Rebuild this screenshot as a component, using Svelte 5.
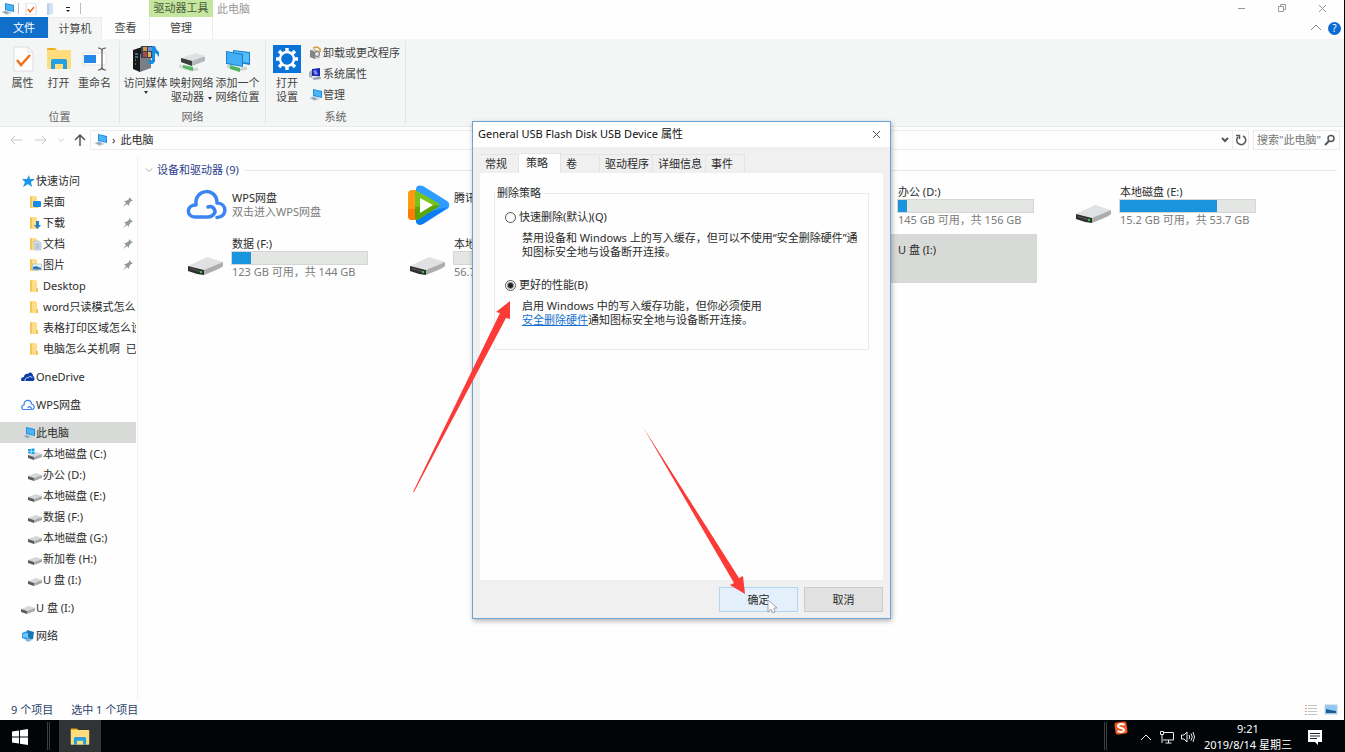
<script>
  let policy = 'better';
  let activeTab = '策略';
  let search = '';

  const tabs = ['常规', '策略', '卷', '驱动程序', '详细信息', '事件'];

  const sections = [
    [
      { label: '快速访问', icon: 'star' },
      { label: '桌面', icon: 'folderDesktop', child: true, pinned: true },
      { label: '下载', icon: 'folderDownload', child: true, pinned: true },
      { label: '文档', icon: 'folderDocument', child: true, pinned: true },
      { label: '图片', icon: 'folderPicture', child: true, pinned: true },
      { label: 'Desktop', icon: 'folder', child: true },
      { label: 'word只读模式怎么改', icon: 'folder', child: true },
      { label: '表格打印区域怎么设', icon: 'folder', child: true },
      { label: '电脑怎么关机啊  已剪', icon: 'folder', child: true }
    ],
    [{ label: 'OneDrive', icon: 'onedrive' }],
    [{ label: 'WPS网盘', icon: 'cloud' }],
    [
      { label: '此电脑', icon: 'pc', selected: true },
      { label: '本地磁盘 (C:)', icon: 'systemDrive', child: true },
      { label: '办公 (D:)', icon: 'drive', child: true },
      { label: '本地磁盘 (E:)', icon: 'drive', child: true },
      { label: '数据 (F:)', icon: 'drive', child: true },
      { label: '本地磁盘 (G:)', icon: 'drive', child: true },
      { label: '新加卷 (H:)', icon: 'drive', child: true },
      { label: 'U 盘 (I:)', icon: 'drive', child: true }
    ],
    [{ label: 'U 盘 (I:)', icon: 'drive' }],
    [{ label: '网络', icon: 'network' }]
  ];

  const items = [
    { name: 'WPS网盘', icon: 'cloud', note: '双击进入WPS网盘' },
    { name: '腾讯视频', icon: 'video' },
    { icon: 'drive' },
    { name: '办公 (D:)', icon: 'drive', used: 7, note: '145 GB 可用，共 156 GB' },
    { name: '本地磁盘 (E:)', icon: 'drive', used: 72, note: '15.2 GB 可用，共 53.7 GB' },
    { name: '数据 (F:)', icon: 'drive', used: 14, note: '123 GB 可用，共 144 GB' },
    { name: '本地磁盘 (G:)', icon: 'drive', used: 0, note: '56.7 GB 可用' },
    { icon: 'drive' },
    { name: 'U 盘 (I:)', icon: 'usb', selected: true }
  ];
</script>

{#snippet pcShape()}
  <path d="M5 1 L14 3 V10 L5 8 Z" fill="#1d8fe0" />
  <path d="M6 2 L13 4 V9 L6 7 Z" fill="#4db5f5" />
  <path d="M1 10 L6 8 L12 11 L7 13 Z" fill="#c3d3de" />
  <path d="M3 10 L6 9 L9 11 L6 12 Z" fill="#8ea5b5" />
{/snippet}

{#snippet folderShape()}
  <path d="M2 1 H7 L9 2 V13 H2 Z" fill="#ffdc86" />
  <path d="M2 1 L4 2 V12 L2 13 Z" fill="#f2c55c" />
  <path d="M8 9 L10 9 V13 H8 Z" fill="#f2c55c" />
{/snippet}

{#snippet driveShape()}
  <path d="M0 8 L8 5 L14 7 L6 10 Z" fill="#d5d7d8" />
  <path d="M0 8 L6 10 V13 L0 11 Z" fill="#5a5d5c" />
  <path d="M6 10 L14 7 V10 L6 13 Z" fill="#a7aaab" />
{/snippet}

{#snippet icon(name)}
  <svg class="icon" viewBox="0 0 14 14" aria-hidden="true">
    {#if name === 'star'}
      <path d="M8 1 L9 5 L14 5 L10 8 L11 13 L7 10 L2 13 L4 8 L1 5 L6 5 Z" fill="#1c97ea" />
    {:else if name === 'onedrive'}
      <path d="M0 10 C0 8 1 7 3 7 C3 5 5 3 7 4 C9 1 12 3 12 6 C14 7 14 11 12 11 H2 C1 11 0 11 0 10 Z" fill="#0b3fa8" />
      <path d="M4 11 C4 8 6 7 7 8 C8 6 11 6 11 8" fill="none" stroke="#fff" stroke-width="0.8" />
    {:else if name === 'cloud'}
      <path d="M10 11.500 H3 C0 11.500 0 7 3 7 C3 1 10 1 10.500 6 C14 6.500 14 11.500 11 11.500 C10 8 7 8 7 10" fill="none" stroke="#3b82ee" stroke-width="1.200" />
    {:else if name === 'pc'}
      {@render pcShape()}
    {:else if name === 'network'}
      <path d="M1 4 L6 2 L11 4 V9 L6 11 L1 9 Z" fill="#2d9be5" />
      <path d="M6 1 L13 3 L12 10 L8 11 Z" fill="#1777b6" />
      <path d="M2 5 L7 4 V9 L2 8 Z" fill="#72c8fa" />
      <path d="M4 11 L8 9 L11 11 L7 13 Z" fill="#86b7d4" />
    {:else if name === 'drive' || name === 'systemDrive'}
      {@render driveShape()}
      {#if name === 'systemDrive'}
        <path d="M0 2 h3 v2 h-3 z M3.500 1.500 h3 v2.500 h-3 z M0 4.500 h3 v2 h-3 z M3.500 4.500 h3 v2.500 h-3 z" fill="#16a6ee" />
      {/if}
    {:else}
      {@render folderShape()}
      {#if name === 'folderDesktop'}
        <rect x="5" y="6" width="8" height="6" rx="1" fill="#138ce8" />
      {:else if name === 'folderDownload'}
        <path d="M8 5 h3 v4 h2 L9.500 13 L6 9 h2 z" fill="#2680cf" />
      {:else if name === 'folderDocument'}
        <path d="M6 4 h5 l2 2 v7 h-7 z" fill="#dbe5ed" stroke="#9bb0c1" stroke-width="0.600" />
        <path d="M7.500 7 h4 M7.500 9 h4 M7.500 11 h4" stroke="#7f9bb2" stroke-width="0.800" />
      {:else if name === 'folderPicture'}
        <rect x="4.500" y="6" width="9" height="6" fill="#e3f1fb" stroke="#9fb8ca" stroke-width="0.600" />
        <path d="M5 11.500 V9 L8 8 L13 10 V11.500 Z" fill="#2b78b8" />
      {/if}
    {/if}
  </svg>
{/snippet}

{#snippet largeIcon(name)}
  <svg class="large-icon" viewBox="0 0 42 42" aria-hidden="true">
    {#if name === 'cloud'}
      <path d="M22 22 C28 20 31 27 27 30 Q25 32 22 32 H9 C0 32 0 20 10 20 C8 3 31 2 31 18 C41 18 42 32 31 32.500" fill="none" stroke="#3c84f2" stroke-width="3.500" stroke-linecap="round" stroke-linejoin="round" />
    {:else if name === 'video'}
      <rect x="0" y="5" width="14" height="30" rx="4" fill="#ff9a12" />
      <path d="M0 24 H12 V35 H4 C1 35 0 33 0 31 Z" fill="#ff7a0a" />
      <path d="M8 4 C8 0 12 0 15 1 L39 16 C42 18 42 22 39 24 L15 39 C11 41 8 39 8 36 Z" fill="#2d9dff" />
      <path d="M8 30 L40 22 L15 39 C11 41 8 39 8 36 Z" fill="#0c7cf2" />
      <path d="M7 7 Q8 5 11 7 L30 18 Q33 20 30 22 L11 34 Q8 36 7 34 Z" fill="#76c31b" />
      <path d="M7 22 L31 20 Q32 21 30 22 L11 34 Q8 36 7 34 Z" fill="#5aa40b" />
      <path d="M12 13 L25 20 L12 28 Z" fill="#fff" />
    {:else if name === 'drive'}
      <path d="M2 29 L21 20 Q22 20 24 21 L37 25 L19 33 Z" fill="#dfe1e2" />
      <path d="M2 29 L18 33 V38 Q9 37 2 34 Z" fill="#2d302f" />
      <path d="M18 33 L37 25 V29 Q36 31 18 38 Z" fill="#abadae" />
      <path d="M4 31 L14 34 V35 L4 32 Z" fill="#5b605e" />
      <rect x="14" y="34" width="2" height="2" fill="#35cd3f" />
    {:else}
      <path d="M8 26 L26 14 L34 20 L16 33 Z" fill="#7d8284" />
    {/if}
  </svg>
{/snippet}

{#snippet explorerIcon()}
  <svg class="ribbon-icon" viewBox="0 0 26 26" aria-hidden="true">
    <path d="M1 3 Q1 2 2 2 H9 L12 5 H1 Z" fill="#eeb01b" />
    <rect x="1" y="4" width="24" height="19" rx="1" fill="#ffdc7c" />
    <path d="M5 23 V15 Q5 13 7 13 H19 Q21 13 21 15 V23 H17 V18 H9 V23 Z" fill="#269fe0" />
  </svg>
{/snippet}

<div class="desktop">
  <div class="explorer">
    <header class="titlebar">
      <div class="quick-access">
        {@render icon('pc')}
        <span class="bar"></span>
        <button aria-label="属性">
          <svg viewBox="0 0 12 12"><path d="M1 0 h8 l2 2 v10 h-10 z" fill="#fff" stroke="#d4d4d4" /><path d="M3 6 L5 9 L9 4" fill="none" stroke="#ef6b19" stroke-width="1.500" /></svg>
        </button>
        <button aria-label="新建文件夹">
          <svg viewBox="0 0 12 12"><path d="M3 0 h5 l1 1 v10 l-6 1 z" fill="#d3e3f5" /><path d="M3 1 h2 v11 h-2 z" fill="#b9d0ea" /></svg>
        </button>
        <button aria-label="自定义快速访问工具栏">
          <svg viewBox="0 0 12 12"><path d="M3 4.500 h4" stroke="#222" /><path d="M3 7 h4 l-2 2 z" fill="#222" /></svg>
        </button>
        <span class="bar"></span>
      </div>
      <span class="tool-title">驱动器工具</span>
      <span class="window-title">此电脑</span>
      <div class="window-buttons">
        <button aria-label="最小化"><svg viewBox="0 0 10 10"><path d="M1 4.500 h7" /></svg></button>
        <button aria-label="还原"><svg viewBox="0 0 10 10"><path d="M1.500 2.500 h5 v5 h-5 z M3.500 2.500 v-2 h5 v5 h-2" /></svg></button>
        <button aria-label="关闭"><svg viewBox="0 0 10 10"><path d="M2 1 L9 8 M9 1 L2 8" /></svg></button>
      </div>
    </header>

    <nav class="ribbon-tabs">
      <button class="file">文件</button>
      <button class="current">计算机</button>
      <button class="view">查看</button>
      <button class="manage">管理</button>
      <div class="ribbon-help">
        <button aria-label="最小化功能区"><svg viewBox="0 0 12 12"><path d="M1 8 L6 3 L11 8" fill="none" stroke="#888" /></svg></button>
        <button class="help" aria-label="帮助">?</button>
      </div>
    </nav>

    <div class="ribbon">
      <section class="group place">
        <div class="tools">
          <button class="tool">
            <svg class="ribbon-icon" viewBox="0 0 26 26"><path d="M4 1 H18 L23 6 V25 H4 Z" fill="#fdfdfd" stroke="#dedede" /><path d="M18 1 V6 H23" fill="none" stroke="#dedede" /><path d="M7 14 L11 19 L20 9" fill="none" stroke="#f0731c" stroke-width="2.500" /></svg>
            <span>属性</span>
          </button>
          <button class="tool">
            {@render explorerIcon()}
            <span>打开</span>
          </button>
          <button class="tool">
            <svg class="ribbon-icon" viewBox="0 0 26 26"><rect x="1" y="7" width="23" height="12" fill="#fff" stroke="#e2e2e2" /><rect x="2" y="9" width="12" height="8" fill="#2388e8" /><path d="M16 2 Q20 2 20 5 Q20 2 24 2 M20 4 V22 M16 24 Q20 24 20 21 Q20 24 24 24" fill="none" stroke="#555" stroke-width="1.200" /></svg>
            <span>重命名</span>
          </button>
        </div>
        <h2>位置</h2>
      </section>

      <section class="group net">
        <div class="tools">
          <button class="tool">
            <svg class="ribbon-icon" viewBox="0 0 26 26">
              <path d="M0 4 L9 1 V23 L7 26 L0 23 Z" fill="#18191b" /><path d="M7 8 L18 4 V22 L7 26 Z" fill="#7b7e82" />
              <path d="M8 0 H20 V12 H8 Z" fill="#33415a" /><path d="M10 1 h4 v4 h-4 z" fill="#d39b3c" /><path d="M15 1 h4 v4 h-4 z" fill="#6f8fd0" /><path d="M10 6 h4 v5 h-4 z" fill="#b04a36" /><path d="M15 6 h3 v5 h-3 z" fill="#d9b56a" />
              <path d="M2 8 h3 M2 11 h3 M2 14 h1 M2 18 h1" stroke="#7fb7dd" /><ellipse cx="18" cy="16" rx="3" ry="2" fill="#178de0" /><path d="M19 0 H22 Q23 4 26 6 Q27 9 25 11 Q25 8 22 7 V16 H19 Z" fill="#178de0" />
            </svg>
            <span>访问媒体</span>
            <i class="caret"></i>
          </button>
          <button class="tool">
            <svg class="ribbon-icon" viewBox="0 0 26 26">
              <path d="M2 13 L17 8 L26 11 V15 L13 20 L2 16 Z" fill="#b6b9bb" /><path d="M2 12 L17 7 L26 10 L13 15 Z" fill="#dfe1e2" /><path d="M2 12 L13 15 V20 L2 16 Z" fill="#3b3e3d" />
              <path d="M0 20 L12 24 L19 23" fill="none" stroke="#d0d7d2" stroke-width="3" /><path d="M4 19 L14 21 V25 L4 22 Z" fill="#53b968" />
            </svg>
            <span>映射网络<br />驱动器<i class="caret inline"></i></span>
          </button>
          <button class="tool">
            <svg class="ribbon-icon" viewBox="0 0 26 26">
              <path d="M8 4 L25 6 V19 L8 16 Z" fill="#1480d3" /><path d="M9 5 L24 7 V17 L9 15 Z" fill="#58bcf6" />
              <path d="M1 5 L18 8 V21 L1 18 Z" fill="#1480d3" /><path d="M2 6 L17 9 V20 L2 17 Z" fill="#42aef3" />
              <path d="M2 20 L13 24 L22 22" fill="none" stroke="#cdd5d0" stroke-width="3" /><path d="M5 19 L15 22 V26 L5 23 Z" fill="#4db561" />
            </svg>
            <span>添加一个<br />网络位置</span>
          </button>
        </div>
        <h2>网络</h2>
      </section>

      <section class="group system">
        <div class="tools">
          <button class="tool">
            <svg class="ribbon-icon gear" viewBox="0 0 28 28">
              <rect width="28" height="28" fill="#0a73da" />
              <circle cx="14" cy="14" r="7" fill="none" stroke="#fff" stroke-width="2.400" />
              <path d="M14 7 V3 M14 21 V25 M7 14 H3 M21 14 H25 M9 9 L6 6 M19 9 L22 6 M9 19 L6 22 M19 19 L22 22" stroke="#fff" stroke-width="3.400" />
            </svg>
            <span>打开<br />设置</span>
          </button>
          <div class="links">
            <button>
              <svg class="icon" viewBox="0 0 14 14"><path d="M2 4 L7 3 L12 5 V12 L7 13 L2 11 Z" fill="#c9c6bb" /><path d="M2 4 L7 6 V13 L2 11 Z" fill="#85867f" /><circle cx="9" cy="8" r="2.500" fill="#e8e9e6" stroke="#777" /><path d="M5 2 L9 1 L12 3 V6" fill="none" stroke="#d79a36" stroke-width="1.500" /></svg>
              卸载或更改程序
            </button>
            <button>
              <svg class="icon" viewBox="0 0 14 14"><path d="M1 5 L4 3 V11 L1 10 Z" fill="#a8b1bb" /><path d="M4 2 L12 1 V9 L4 9 Z" fill="#1d25b5" /><path d="M5 4 L8 3 L10 7 L7 8 Z" fill="#7b8df0" /><path d="M4 11 L12 9 L13 12 L6 13 Z" fill="#9aa5b3" /></svg>
              系统属性
            </button>
            <button>
              {@render icon('pc')}
              管理
            </button>
          </div>
        </div>
        <h2>系统</h2>
      </section>
    </div>

    <div class="address-row">
      <div class="history">
        <button aria-label="后退" disabled><svg viewBox="0 0 12 12"><path d="M12 6 H1 M5 2 L1 6 L5 10" stroke="#c8c8c8" /></svg></button>
        <button aria-label="前进" disabled><svg viewBox="0 0 12 12"><path d="M0 6 H11 M7 2 L11 6 L7 10" stroke="#c8c8c8" /></svg></button>
        <button class="small" aria-label="最近浏览的位置"><svg viewBox="0 0 12 12"><path d="M2 4 L6 8 L10 4" stroke="#b5b5b5" /></svg></button>
        <button aria-label="上移"><svg viewBox="0 0 12 12"><path d="M6 12 V1 M1 6 L6 1 L11 6" stroke="#555" stroke-width="1.500" /></svg></button>
      </div>
      <div class="address">
        {@render icon('pc')}
        <span class="crumb-arrow">›</span>
        <a href="#pc">此电脑</a>
        <button class="drop" aria-label="以前的位置"><svg viewBox="0 0 12 12"><path d="M3 4 L6 7 L9 4" stroke="#555" stroke-width="2" /></svg></button>
        <button class="refresh" aria-label="刷新"><svg viewBox="0 0 12 12"><path d="M8 2 A4.500 4.500 0 1 1 3 3 M1 1.500 H4.500 V5" stroke="#555" stroke-width="1.500" /></svg></button>
      </div>
      <div class="search">
        <input type="text" bind:value={search} placeholder={'搜索"此电脑"'} aria-label="搜索" />
        <svg viewBox="0 0 12 12"><circle cx="7" cy="4.500" r="3" stroke="#555" stroke-width="1.500" /><path d="M5 7 L1 11" stroke="#555" stroke-width="2" /></svg>
      </div>
    </div>

    <div class="body">
      <nav class="tree">
        {#each sections as section}
          <ul>
            {#each section as node}
              <li>
                <a href="#node" class:child={node.child} class:selected={node.selected}>
                  {@render icon(node.icon)}
                  <span>{node.label}</span>
                  {#if node.pinned}
                    <svg class="pin" viewBox="0 0 10 10"><path d="M6 0 L10 4 L8 4 L6 7 V9 L4 7 L0 10 L3 6 L1 4 H3 L6 2 Z" fill="#8d989f" /></svg>
                  {/if}
                </a>
              </li>
            {/each}
          </ul>
        {/each}
      </nav>

      <main class="content">
        <div class="content-title">
          <svg viewBox="0 0 10 10"><path d="M1 3 L5 7 L9 3" fill="none" stroke="#999" /></svg>
          <h1>设备和驱动器 (9)</h1>
          <span class="rule"></span>
        </div>
        <div class="tiles">
          {#each items as item}
            <button class="tile" class:selected={item.selected} class:volume={item.used !== undefined}>
              {@render largeIcon(item.icon)}
              {#if item.name}
                <span class="info">
                  <span class="name">{item.name}</span>
                  {#if item.used !== undefined}
                    <span class="usage"><span class="used" style="width: {item.used}%"></span></span>
                  {/if}
                  {#if item.note}
                    <span class="note">{item.note}</span>
                  {/if}
                </span>
              {/if}
            </button>
          {/each}
        </div>
      </main>
    </div>

    <footer class="status">
      <span>9 个项目</span>
      <span class="picked">选中 1 个项目</span>
      <div class="views">
        <button aria-label="详细信息"><svg viewBox="0 0 14 12"><path d="M1 1.500 h2 M1 4.500 h2 M1 7.500 h2 M1 10.500 h2" stroke="#d5a58e" /><path d="M4 1.500 h9 M4 4.500 h9 M4 7.500 h9 M4 10.500 h9" stroke="#c2c2c2" /></svg></button>
        <button aria-label="大图标"><svg viewBox="0 0 14 12"><rect x="1" y="1" width="12" height="9" fill="#8ec8f4" stroke="#b7cddd" /><path d="M2 9 V5 L6 6 L12 7 V9 Z" fill="#1b5c94" /></svg></button>
      </div>
    </footer>
  </div>

  <div class="taskbar">
    <button class="start" aria-label="开始">
      <svg viewBox="0 0 16 16"><path d="M0 2.500 L7 1.500 V7.500 H0 Z M8 1.300 L16 0 V7.500 H8 Z M0 8.500 H7 V14.500 L0 13.500 Z M8 8.500 H16 V16 L8 14.700 Z" fill="#fff" /></svg>
    </button>
    <span class="grip"></span>
    <button class="running" aria-label="文件资源管理器">{@render explorerIcon()}</button>
    <div class="tray">
      <span class="grip"></span>
      <svg class="sogou" viewBox="0 0 14 14"><rect x="1" y="1" width="12" height="12" rx="2" fill="#f0591d" transform="rotate(-8 7 7)" /><path d="M10.500 4 C8 2.500 4 3 4 5 C4 7.500 10 6.500 10 9 C10 11 6 11.500 3.500 10" fill="none" stroke="#fff" stroke-width="2" /></svg>
      <button aria-label="显示隐藏的图标"><svg viewBox="0 0 14 14"><path d="M2 10 L7 5 L12 10" /></svg></button>
      <button aria-label="网络"><svg viewBox="0 0 14 14"><path d="M4 2.500 H13.500 V10 H3 M8.500 10 V13 M5.500 13 H11.500 M0.500 1.500 H3.500 V4.500 H0.500 Z M2 4.500 V13" /></svg></button>
      <button aria-label="音量"><svg viewBox="0 0 14 14"><path d="M0.500 5 H3 L6 2 V12 L3 9 H0.500 Z M8 5 Q9.500 7 8 9 M10 3.500 Q12.500 7 10 10.500 M12 2 Q15 7 12 12" /></svg></button>
      <div class="clock"><span>9:21</span><span>2019/8/14 星期三</span></div>
      <button class="action" aria-label="操作中心"><svg viewBox="0 0 16 16"><path d="M1 1 H15 V13 H11 V16 L8 13 H1 Z" fill="#fff" stroke="none" /><path d="M3 4.500 H13 M3 7 H13 M3 9.500 H10" stroke="#222" /></svg></button>
    </div>
  </div>

  <div class="dialog" role="dialog" aria-labelledby="dialog-title">
    <div class="dialog-title">
      <h2 id="dialog-title">General USB Flash Disk USB Device 属性</h2>
      <button aria-label="关闭"><svg viewBox="0 0 10 10"><path d="M2 2 L9 9 M9 2 L2 9" stroke="#555" /></svg></button>
    </div>

    <div class="dialog-body">
      <div class="dialog-tabs" role="tablist">
        {#each tabs as tab}
          <button role="tab" aria-selected={tab === activeTab} class:active={tab === activeTab} on:click={() => (activeTab = tab)}>{tab}</button>
        {/each}
      </div>

      <div class="pane">
        <fieldset>
          <legend>删除策略</legend>
          <div class="options">
            <label for="quick"><input id="quick" type="radio" name="policy" value="quick" bind:group={policy} />快速删除(默认)(Q)</label>
            <p>禁用设备和 Windows 上的写入缓存，但可以不使用“安全删除硬件”通<br />知图标安全地与设备断开连接。</p>
            <label for="better"><input id="better" type="radio" name="policy" value="better" bind:group={policy} />更好的性能(B)</label>
            <p>启用 Windows 中的写入缓存功能，但你必须使用<br /><a href="#remove">安全删除硬件</a>通知图标安全地与设备断开连接。</p>
          </div>
        </fieldset>
      </div>

      <div class="actions">
        <button class="ok">确定</button>
        <button>取消</button>
      </div>
    </div>

    <svg class="marks" viewBox="0 0 418 498" aria-hidden="true">
      <path d="M-59 371 L28 192 L24 191 L38 180 V198 L34 197 L-58 371 Z" fill="#fc3a38" />
      <path d="M171 306 L262 462 L258 464 L273 473 L271 455 L267 457 Z" fill="#fc3a38" />
      <path d="M296 479 V491 L299 488 L301 492 L303 491 L302 487 H305 Z" fill="#fff" stroke="#8d9194" stroke-width="0.800" />
    </svg>
  </div>
</div>

<style>
  :global(body) {
    background-color: #fdfefd;
  }

  .desktop {
    display: flex;
    flex-direction: column;
    position: relative;
    min-height: 100vh;
    overflow: hidden;
    color: #2b2b2b;
    font-family: "Noto Sans", "Noto Sans CJK SC", sans-serif;
    font-size: 11px;
    line-height: 14px;
  }

  button, input {
    margin: 0;
    padding: 0;
    border: 0;
    background: none;
    color: inherit;
    font: inherit;
  }

  h1, h2, p, ul {
    margin: 0;
    padding: 0;
    font-size: 11px;
    font-weight: normal;
  }

  ul {
    list-style: none;
  }

  svg {
    display: block;
    flex: none;
  }

  a {
    color: inherit;
    text-decoration: none;
  }

  .icon {
    width: 14px;
    height: 14px;
  }

  .explorer {
    display: flex;
    flex: 1;
    flex-direction: column;
    border-right: 1px solid #000;
  }

  /* title bar */
  .titlebar {
    display: flex;
    align-items: center;
    height: 17px;
  }

  .quick-access {
    display: flex;
    align-items: center;
    gap: 4px;
    width: 149px;
  }

  .quick-access .bar {
    width: 1px;
    height: 11px;
    background-color: #bbb;
  }

  .quick-access button {
    padding: 0 1px 0 2px;
  }

  .quick-access button svg {
    width: 12px;
    height: 12px;
  }

  .tool-title {
    width: 64px;
    height: 17px;
    background-color: #c5e69f;
    color: #4a5a3c;
    line-height: 16px;
    text-align: center;
  }

  .window-title {
    padding-left: 4px;
    color: #999;
  }

  .window-buttons {
    display: flex;
    gap: 30px;
    margin-left: auto;
    padding-right: 17px;
  }

  .window-buttons svg {
    width: 10px;
    height: 10px;
    fill: none;
    stroke: #999;
  }

  /* ribbon */
  .ribbon-tabs {
    display: flex;
    height: 22px;
  }

  .ribbon-tabs > button {
    width: 54px;
    color: #444;
  }

  .ribbon-tabs > .file {
    width: 48px;
    height: 21px;
    background-color: #0f6fcb;
    color: #fff;
  }

  .ribbon-tabs > .current {
    background-color: #f4f6f5;
    border: 1px solid #ebebeb;
    border-bottom: 0;
  }

  .ribbon-tabs > .view {
    width: 47px;
  }

  .ribbon-tabs > .manage {
    width: 64px;
    border: 1px solid #ededed;
    border-width: 0 1px;
  }

  .ribbon-help {
    display: flex;
    align-items: center;
    gap: 6px;
    margin-left: auto;
    padding-right: 3px;
  }

  .ribbon-help svg {
    width: 12px;
    height: 12px;
  }

  .ribbon-help .help {
    width: 13px;
    height: 13px;
    border-radius: 50%;
    background-color: #0a6cd2;
    color: #fff;
    font-size: 10px;
    line-height: 13px;
  }

  .ribbon {
    display: flex;
    height: 87px;
    background-color: #f4f6f5;
    border-bottom: 1px solid #e8eae9;
  }

  .group {
    display: flex;
    flex-direction: column;
    justify-content: space-between;
    margin: 2px 0;
    padding-top: 5px;
    border-right: 1px solid #e4e6e5;
  }

  .group.place {
    width: 119px;
  }

  .group.net {
    width: 145px;
  }

  .group.system {
    width: 139px;
  }

  .group h2 {
    color: #666;
    text-align: center;
  }

  .tools {
    display: flex;
    justify-content: center;
    padding-right: 2px;
    color: #444;
  }

  .tool {
    display: flex;
    flex-direction: column;
    align-items: center;
    gap: 4px;
    min-width: 36px;
  }

  .net .tool {
    min-width: 46px;
  }

  .ribbon-icon {
    width: 26px;
    height: 26px;
  }

  .ribbon-icon.gear {
    width: 28px;
    height: 28px;
    margin: -1px 0;
  }

  .caret {
    border: 2px solid transparent;
    border-top: 3px solid #333;
    border-bottom: 0;
  }

  .tool > .caret {
    margin-top: -3px;
  }

  .caret.inline {
    display: inline-block;
    margin-left: 4px;
    vertical-align: middle;
  }

  .links {
    display: flex;
    flex-direction: column;
    gap: 7px;
    padding-left: 3px;
  }

  .links button {
    display: flex;
    align-items: center;
    gap: 1px;
  }

  /* address */
  .address-row {
    display: flex;
    align-items: flex-start;
    gap: 4px;
    padding: 3px 4px 5px 10px;
  }

  .history {
    display: flex;
    align-items: center;
    gap: 13px;
    width: 76px;
    height: 20px;
  }

  .address-row svg:not(.icon) {
    width: 12px;
    height: 12px;
    fill: none;
  }

  .history .small {
    margin: 0 -4px 0 -3px;
  }

  .history .small svg {
    width: 8px;
  }

  .address {
    display: flex;
    flex: 1;
    align-items: center;
    height: 18px;
    padding-left: 2px;
    border: 1px solid #ececec;
  }

  .crumb-arrow {
    padding: 0 5px;
  }

  .address .drop {
    margin-left: auto;
  }

  .address .refresh {
    height: 18px;
    margin-left: 1px;
    padding: 0 1px 0 2px;
    border-left: 1px solid #ececec;
  }

  .search {
    display: flex;
    align-items: center;
    width: 79px;
    height: 18px;
    padding: 0 3px 0 3px;
    border: 1px solid #ececec;
  }

  .search input {
    flex: 1;
    min-width: 0;
    outline: 0;
  }

  .search input::placeholder {
    color: #777;
    opacity: 1;
  }

  /* tree and content */
  .body {
    display: flex;
    flex: 1;
  }

  .tree {
    flex: none;
    width: 136px;
    padding: 15px 1px 0 0;
    border-right: 1px solid #f2f3f2;
  }

  .tree ul {
    margin-bottom: 7px;
  }

  .tree a {
    display: flex;
    align-items: center;
    gap: 1px;
    height: 21px;
    padding-left: 21px;
    overflow: hidden;
    white-space: pre;
  }

  .tree a.child {
    padding-left: 28px;
  }

  .tree a.selected {
    background-color: #d8dad8;
  }

  .pin {
    width: 10px;
    height: 10px;
    margin: 0 3px 0 auto;
  }

  .content {
    flex: 1;
    min-width: 0;
    padding: 8px 7px 0;
  }

  .content-title {
    display: flex;
    align-items: center;
    color: #30408c;
  }

  .content-title svg {
    width: 8px;
    height: 8px;
    margin-right: 4px;
  }

  .rule {
    flex: 1;
    height: 1px;
    margin-left: 6px;
    background-color: #e6e8e7;
  }

  .tiles {
    display: grid;
    grid-template-columns: repeat(auto-fill, 220px);
    gap: 3px 2px;
    padding: 5px 0 0 6px;
  }

  .tile {
    display: flex;
    align-items: flex-start;
    gap: 3px;
    height: 49px;
    padding: 3px 0 0 35px;
    text-align: left;
  }

  .tile.selected {
    background-color: #d8dad8;
  }

  .large-icon {
    width: 42px;
    height: 42px;
  }

  .info {
    display: flex;
    flex-direction: column;
    width: 137px;
    padding-top: 6px;
    white-space: nowrap;
  }

  .volume .info {
    padding-top: 0;
  }

  .name, .note {
    padding-left: 1px;
  }

  .note {
    color: #7b7c7b;
  }

  .usage {
    height: 12px;
    border: 1px solid #d5d7d5;
    background-color: #e4e6e4;
  }

  .used {
    display: block;
    height: 12px;
    background-color: #1b94de;
  }

  .status {
    display: flex;
    align-items: center;
    height: 20px;
    padding-left: 11px;
    color: #2b426b;
  }

  .status .picked {
    margin-left: 18px;
  }

  .views {
    display: flex;
    gap: 6px;
    margin-left: auto;
    padding-right: 6px;
  }

  .views svg {
    width: 14px;
    height: 12px;
  }

  /* taskbar */
  .taskbar {
    display: flex;
    align-items: center;
    height: 32px;
    background-color: #020507;
    color: #fff;
  }

  .start {
    padding: 1px 19px 0 12px;
  }

  .start svg {
    width: 16px;
    height: 16px;
  }

  .grip {
    width: 1px;
    height: 28px;
    border: 1px solid #3c3f40;
    border-width: 0 1px;
  }

  .running {
    display: flex;
    align-items: center;
    justify-content: center;
    width: 42px;
    height: 32px;
    margin-left: 9px;
    background-color: #303436;
  }

  .running .ribbon-icon {
    width: 20px;
    height: 20px;
    margin-top: 2px;
  }

  .tray {
    display: flex;
    align-items: center;
    gap: 7px;
    margin-left: auto;
    padding-right: 22px;
  }

  .tray svg {
    width: 14px;
    height: 14px;
    margin-top: 2px;
    fill: none;
    stroke: #eee;
  }

  .tray .sogou {
    align-self: flex-start;
    margin-right: 4px;
    stroke: none;
  }

  .tray .action svg {
    width: 16px;
    height: 16px;
  }

  .clock {
    display: flex;
    flex-direction: column;
    align-items: center;
    margin: 2px 8px 0 2px;
    line-height: 16px;
  }

  /* properties window */
  .dialog {
    position: absolute;
    left: 472px;
    top: 121px;
    width: 417px;
    background-color: #eff0ef;
    border: 1px solid #6ba3d6;
    box-shadow: 1px 2px 5px rgba(0, 0, 0, 0.3);
  }

  .dialog-title {
    display: flex;
    align-items: center;
    justify-content: space-between;
    height: 23px;
    padding: 0 9px 2px 5px;
    background-color: #fff;
    color: #111;
  }

  .dialog-title svg {
    width: 10px;
    height: 10px;
  }

  .dialog-body {
    padding: 6px 7px 6px 7px;
  }

  .dialog-tabs {
    display: flex;
    align-items: flex-end;
  }

  .dialog-tabs button {
    min-width: 39px;
    height: 19px;
    padding: 0 3px 0 5px;
    border: 1px solid #e3e4e3;
    border-width: 1px 1px 0 0;
    text-align: left;
  }

  .dialog-tabs .active {
    min-width: 42px;
    height: 20px;
    padding: 0 7px 2px;
    background-color: #fdfefd;
  }

  .pane {
    min-height: 394px;
    padding: 13px 14px 0;
    background-color: #fdfefd;
  }

  fieldset {
    margin: 0;
    padding: 0;
    border: 1px solid #e9ebe9;
  }

  legend {
    padding: 0 2px;
  }

  .options {
    padding: 10px 0 22px 10px;
  }

  .options label {
    display: flex;
    align-items: center;
    gap: 3px;
  }

  .options input {
    appearance: none;
    width: 11px;
    height: 11px;
    border: 1px solid #555;
    border-radius: 50%;
    background-color: #fff;
  }

  .options input:checked {
    background-image: radial-gradient(circle, #222 0 2px, transparent 4px);
  }

  .options p {
    margin: 7px 0 19px 17px;
    white-space: nowrap;
  }

  .options p:last-child {
    margin-bottom: 0;
  }

  .options a {
    color: #1670d0;
    text-decoration: underline;
  }

  .actions {
    display: flex;
    justify-content: flex-end;
    gap: 6px;
    padding-top: 7px;
  }

  .actions button {
    width: 79px;
    height: 25px;
    background-color: #e0e1e0;
    border: 1px solid #cacbca;
  }

  .actions .ok {
    background-color: #e3f0fc;
    border-color: #b0d6f3;
  }

  .marks {
    position: absolute;
    left: -1px;
    top: -1px;
    width: 418px;
    height: 498px;
    overflow: visible;
    pointer-events: none;
  }
</style>
